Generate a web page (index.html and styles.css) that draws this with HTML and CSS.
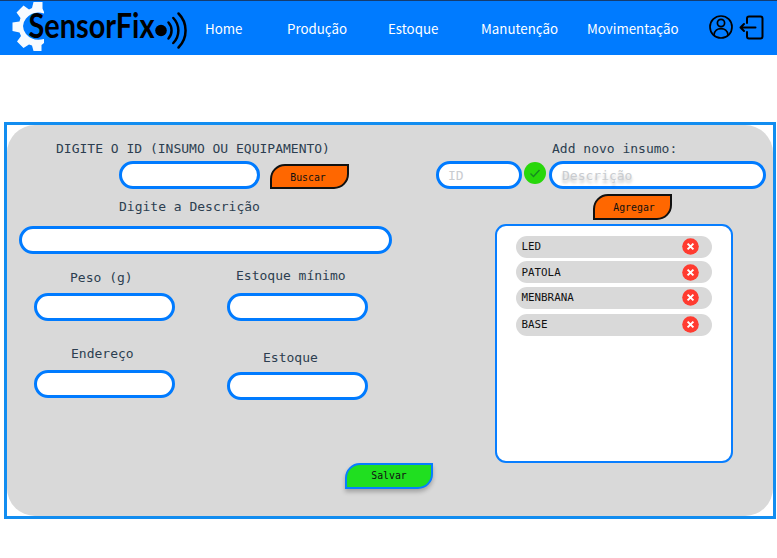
FILE: index.html
```html
<!DOCTYPE html>
<html lang="pt-BR">
<head>
<meta charset="utf-8">
<title>SensorFix</title>
<link rel="stylesheet" href="styles.css">
</head>
<body>
<header class="topbar">
  <svg class="logo" width="180" height="55" viewBox="10 0 180 55">
    <path class="gear" d="M44 12L42.500 8.500V2H33.500L32 8L29 9.500L23.500 5.500L16.500 12.500L20.500 18L19.500 21.500L12.500 22.500V31L19.500 32.500L21 36L17 41.500L23.500 48L29 44.500L32 45.500L33.500 51H41.500V45L44 43V39Q33 42 26 34Q20 26 26 18.500Q33 10 44 13.500Z"/>
    <text class="logo-text" x="28.500" y="38" textLength="126" lengthAdjust="spacingAndGlyphs">SensorFix</text>
    <circle cx="161" cy="30.500" r="5.800"/>
    <path d="M168.500 22.500A12 12 0 0 1 168.500 38.500M173.300 18A18 18 0 0 1 173.300 43M178.500 13.500A24 24 0 0 1 178.500 47.500" fill="none" stroke="#000" stroke-width="2.500" stroke-linecap="round"/>
  </svg>
  <nav class="nav">
    <a class="home">Home</a>
    <a class="producao">Produção</a>
    <a class="estoque">Estoque</a>
    <a class="manutencao">Manutenção</a>
    <a class="movimentacao">Movimentação</a>
  </nav>
  <div class="actions">
    <svg width="24" height="24" viewBox="0 0 24 24" fill="none" stroke="#000" stroke-width="1.700"><circle cx="12" cy="12" r="11"/><circle cx="12" cy="8" r="3.600"/><path d="M5 20C5.500 11.500 18.500 11.500 19 20"/></svg>
    <svg width="25" height="25" viewBox="0 0 25 25" fill="none" stroke="#000" stroke-width="2" stroke-linecap="round" stroke-linejoin="round"><path d="M8 8V3.500Q8 1.500 10 1.500H21.500Q23.500 1.500 23.500 3.500V21.500Q23.500 23.500 21.500 23.500H10Q8 23.500 8 21.500V17M16.500 12.500H1.500M5 9L1.500 12.500L5 16"/></svg>
  </div>
</header>
<main class="frame">
  <div class="panel">
    <section class="form">
      <label class="label label-id">DIGITE O ID (INSUMO OU EQUIPAMENTO)</label>
      <div class="search">
        <div class="input small"></div>
        <button class="button">Buscar</button>
      </div>
      <label class="label label-desc">Digite a Descrição</label>
      <div class="input wide"></div>
      <div class="fields">
        <div class="column">
          <label class="label peso">Peso (g)</label>
          <div class="input small"></div>
          <label class="label endereco">Endereço</label>
          <div class="input small"></div>
        </div>
        <div class="column second">
          <label class="label minimo">Estoque mínimo</label>
          <div class="input small"></div>
          <label class="label quantidade">Estoque</label>
          <div class="input small"></div>
        </div>
      </div>
      <button class="button save">Salvar</button>
    </section>
    <section class="supplies">
      <label class="label label-new">Add novo insumo:</label>
      <div class="entry">
        <div class="input code">ID</div>
        <svg class="check" width="22" height="22" viewBox="0 0 22 22"><circle cx="11" cy="11" r="11" fill="#28d70b"/><path d="M6.500 11.500L9.500 14.500L15.500 8" fill="none" stroke="#168b20" stroke-width="1.400"/></svg>
        <div class="input name">Descrição</div>
      </div>
      <button class="button add">Agregar</button>
      <ul class="list">
        <li>LED<svg class="remove" viewBox="0 0 17 17"><circle cx="8.500" cy="8.500" r="8.300"/><path d="M5.600 5.600L11.400 11.400M11.400 5.600L5.600 11.400"/></svg></li>
        <li>PATOLA<svg class="remove" viewBox="0 0 17 17"><circle cx="8.500" cy="8.500" r="8.300"/><path d="M5.600 5.600L11.400 11.400M11.400 5.600L5.600 11.400"/></svg></li>
        <li>MENBRANA<svg class="remove" viewBox="0 0 17 17"><circle cx="8.500" cy="8.500" r="8.300"/><path d="M5.600 5.600L11.400 11.400M11.400 5.600L5.600 11.400"/></svg></li>
        <li>BASE<svg class="remove" viewBox="0 0 17 17"><circle cx="8.500" cy="8.500" r="8.300"/><path d="M5.600 5.600L11.400 11.400M11.400 5.600L5.600 11.400"/></svg></li>
      </ul>
    </section>
  </div>
</main>
</body>
</html>
```
FILE: styles.css
```css
* { box-sizing: border-box; }
body { margin: 0; background: #fff; font-family: "DejaVu Sans Mono", monospace; }
.topbar { height: 55px; background: #007bff; border-top: 1px solid #143c70; display: flex; align-items: flex-start; }
.logo { margin-left: 10px; margin-top: -1px; flex: none; overflow: visible; }
.gear { fill: #f7fbff; }
.logo-text { font: 700 34.5px Lato, sans-serif; }
.nav { display: flex; width: 518px; margin-left: 15px; padding-top: 18px; flex: none; }
.nav a { font: 13.3px/20px "Noto Sans CJK SC", sans-serif; letter-spacing: 0; color: #fff; white-space: nowrap; flex: none; }
.home { width: 82px; }
.producao { width: 101px; }
.estoque { width: 93px; }
.manutencao { width: 106px; }
.actions { display: flex; gap: 6px; margin-left: -14px; padding-top: 14px; flex: none; }
.actions svg { flex: none; }
.frame { width: 772px; height: 397px; margin: 67px 0 0 4px; border: 3px solid #128df0; }
.panel { height: 391px; border-radius: 28px; background: #d9d9d9; display: flex; }
.form { width: 429px; padding-top: 15px; flex: none; }
.supplies { padding-top: 14px; }
.label { display: block; font-size: 13px; line-height: 18px; color: #2c3e50; white-space: pre; }
.label-id { margin-left: 49px; }
.search { display: flex; gap: 10px; height: 28px; margin: 3px 0 0 112px; }
.input { height: 28px; border: 3px solid #007bff; border-radius: 14px; background: #fff; }
.small { width: 141px; }
.wide { width: 373px; margin: 10px 0 0 12px; }
.label-desc { margin: 9px 0 0 112px; }
.button { display: block; width: 79px; height: 25.500px; margin: 2.500px 0 0; padding: 3px 0 0; font: 9.85px/12px "DejaVu Sans Mono", monospace; color: #111; background: #ff6700; border: 2px solid #111; border-radius: 15px 0 15px 0; text-align: center; }
.search .button { padding-right: 3px; }
.fields { display: flex; margin-left: 27px; height: 146px; }
.column { width: 193px; padding-top: 15px; }
.second { padding-top: 13px; }
.peso { margin: 0 0 5.500px 36px; }
.endereco { margin: 24px 0 7px 37px; }
.minimo { margin: 0 0 7.500px 9px; }
.quantidade { margin: 28px 0 5px 36px; }
.save { width: 88px; height: 26px; margin: 63px 0 0 338px; padding-top: 0; background: #20df20; border-color: #087eff; box-shadow: 0 3px 4px rgba(0,0,0,.25); }
.label-new { margin: 1px 0 0 116px; }
.entry { display: flex; margin: 3px 0 0 0; height: 28px; }
.supplies .input { font-size: 13px; line-height: 23px; color: #c9ccd0; padding-left: 9px; }
.code { width: 86px; }
.check { margin: 1px 3px 0 2px; }
.supplies .name { width: 217px; padding-left: 10px; text-shadow: 0 3px 3px rgba(0,0,0,.25); }
.add { margin: 5px 0 0 157px; padding: 2px 0 0 3px; }
.list { width: 238px; height: 239px; margin: 4px 0 0 58.500px; padding: 10px 19px 0 19px; list-style: none; background: #fff; border: 2px solid #087eff; border-radius: 11px; }
.list li { display: flex; align-items: center; justify-content: space-between; height: 22px; padding: 0 13px 0 6px; margin-bottom: 3.500px; border-radius: 11px; background: #d9d9d9; font-size: 10.85px; color: #111; }
.list li:last-child { margin-top: 5px; }
.remove { width: 17px; height: 17px; }
.remove circle { fill: #ff3b30; }
.remove path { fill: none; stroke: #fff; stroke-width: 2; }
```
